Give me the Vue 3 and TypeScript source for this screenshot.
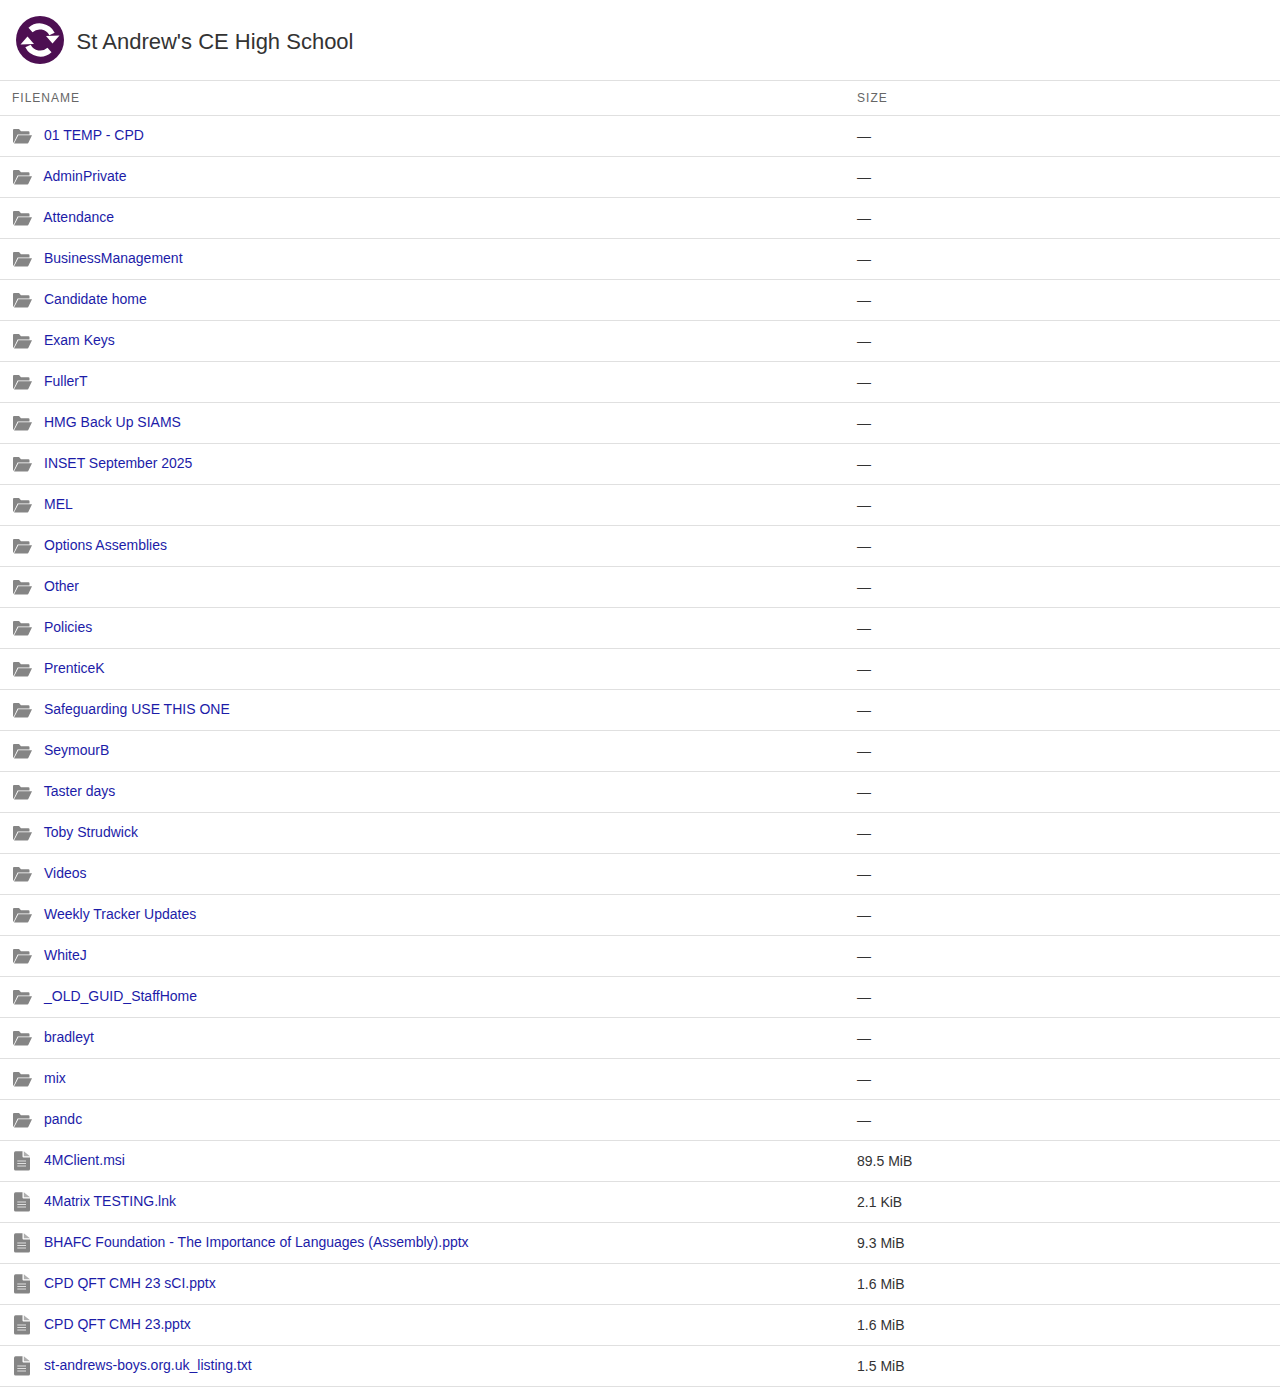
<script setup lang="ts">
interface Entry { name: string; size: string }
const folders = ['01 TEMP - CPD','AdminPrivate','Attendance','BusinessManagement','Candidate home','Exam Keys','FullerT','HMG Back Up SIAMS','INSET September 2025','MEL','Options Assemblies','Other','Policies','PrenticeK','Safeguarding USE THIS ONE','SeymourB','Taster days','Toby Strudwick','Videos','Weekly Tracker Updates','WhiteJ','_OLD_GUID_StaffHome','bradleyt','mix','pandc']
const files: Entry[] = [
  { name: '4MClient.msi', size: '89.5 MiB' },
  { name: '4Matrix TESTING.lnk', size: '2.1 KiB' },
  { name: 'BHAFC Foundation - The Importance of Languages (Assembly).pptx', size: '9.3 MiB' },
  { name: 'CPD QFT CMH 23 sCI.pptx', size: '1.6 MiB' },
  { name: 'CPD QFT CMH 23.pptx', size: '1.6 MiB' },
  { name: 'st-andrews-boys.org.uk_listing.txt', size: '1.5 MiB' },
]
</script>

<template>
  <div class="page">
    <header class="top">
      <svg class="logo" viewBox="0 0 48 48" width="48" height="48">
        <circle cx="24" cy="24" r="24" fill="#4d0f52" />
        <path d="M14.500 14A13.700 13.700 0 0 1 36 18" fill="none" stroke="#fff" stroke-width="6" />
        <path d="M30 20L43.500 19.500L36.500 27.500Z" fill="#fff" />
        <path d="M33.500 34A13.700 13.700 0 0 1 12 30" fill="none" stroke="#fff" stroke-width="6" />
        <path d="M18 28L4.500 28.500L11.500 20.500Z" fill="#fff" />
      </svg>
      <h1 class="title">St Andrew's CE High School</h1>
    </header>
    <table class="listing">
      <thead>
        <tr><th class="c1">FILENAME</th><th class="c2">SIZE</th></tr>
      </thead>
      <tbody>
        <tr v-for="f in folders" :key="f">
          <td class="c1">
            <a class="link" href="#"><svg class="ico" viewBox="0 0 20 16" width="20" height="16">
                <path d="M1 2Q1 1 2 1H7L9 3.200H16.500Q17.500 3.200 17.500 4.200V6.400H5.600L1.800 14.500H1Z" fill="#858585" />
                <path d="M6.300 7.200H20L16.400 14.800Q16.200 15.600 15.400 15.600H2Z" fill="#858585" />
              </svg> {{ f }}</a>
          </td>
          <td class="c2">—</td>
        </tr>
        <tr v-for="f in files" :key="f.name">
          <td class="c1">
            <a class="link" href="#"><svg class="ico file" viewBox="0 0 20 20" width="20" height="20">
                <path d="M3.600.300H10.500V5.500Q10.500 6.500 11.500 6.500H18V18Q18 19.600 16.400 19.600H3.600Q2 19.600 2 18V1.900Q2 .300 3.600 .300Z" fill="#858585" />
                <path d="M11.800.300L18 5.300H11.800Z" fill="#b0b0b0" />
                <path d="M5.300 9.500h8.700v1H5.300zM5.300 12h8.700v1H5.300zM5.300 14.500h8.700v1H5.300z" fill="#e0e0e0" />
              </svg> {{ f.name }}</a>
          </td>
          <td class="c2">{{ f.size }}</td>
        </tr>
      </tbody>
    </table>
  </div>
</template>

<style>
html, body { margin: 0; background: #fff; }
</style>

<style scoped>
.page {
  font-family: "Liberation Sans", Arial, sans-serif;
  color: #333;
  font-size: 14px;
}
.top {
  display: flex;
  align-items: center;
  gap: 12.600px;
  height: 80px;
  padding: 0 16px;
  box-sizing: border-box;
}
.logo { flex: none; display: block; }
.title {
  margin: 3px 0 0;
  font-size: 22px;
  font-weight: 400;
  color: #333;
}
.listing {
  width: 100%;
  border-collapse: collapse;
  table-layout: fixed;
}
.listing tr { border-top: 1px solid #e0e0e0; }
.listing tbody tr:last-child { border-bottom: 1px solid #e0e0e0; }
th {
  height: 34px;
  padding: 0 12px;
  text-align: left;
  font-size: 12px;
  font-weight: 400;
  letter-spacing: 1px;
  color: #666;
}
td {
  height: 40px;
  padding: 0 12px;
  color: #333;
}
.c1 { width: 66.020%; box-sizing: border-box; }
.link { color: #1c1ca8; text-decoration: none; display: inline-block; position: relative; top: -1px; }
.ico { display: inline-block; vertical-align: -4px; margin-right: 8.110px; }
.ico.file { vertical-align: -3px; margin-top: -3px; margin-bottom: -3px; }
</style>
